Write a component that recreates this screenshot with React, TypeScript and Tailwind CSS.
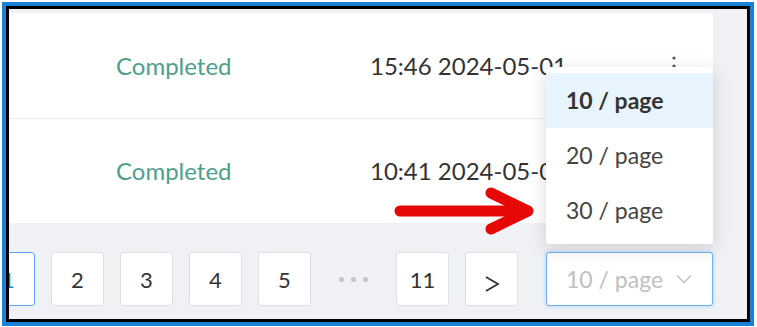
import React from 'react';

const rows = [
  { status: 'Completed', time: '15:46 2024-05-01' },
  { status: 'Completed', time: '10:41 2024-05-01' },
];

const pages = ['1', '2', '3', '4', '5'];
const sizes = ['10 / page', '20 / page', '30 / page'];

const PageButton: React.FC<{ active?: boolean; children: React.ReactNode }> = ({
  active,
  children,
}) => (
  <div
    className={
      'flex h-[54px] w-[53px] shrink-0 items-center justify-center rounded-[3px] border bg-white text-[22px] ' +
      (active ? 'border-[#5aa8f5] text-[#1a7fe0]' : 'border-[#dcdfe4] text-[#333]')
    }
  >
    {children}
  </div>
);

const App: React.FC = () => {
  return (
    <div className="h-[327px] w-[757px] bg-white pb-[1px] pl-[2px] pr-[3px] pt-[2px] font-['Lato','Noto_Sans',sans-serif]">
      <div className="h-full border-4 border-[#1a82d6]">
        <div className="h-full border-[3px] border-black">
          <div className="relative flex h-full flex-col overflow-hidden bg-[#f0f1f4] pt-[4px]">
            {/* Table */}
            <div className="w-[704px] bg-white">
              {rows.map((row, i) => (
                <div
                  key={i}
                  className={
                    'flex items-center pl-[107px] pr-[36px] ' +
                    (i === 0 ? 'h-[106px] border-b border-[#ececec]' : 'h-[104px]')
                  }
                >
                  <span className="w-[254px] text-[24px] text-[#4e9f8c]">{row.status}</span>
                  <span className="text-[24px] text-[#333]">{row.time}</span>
                  <svg className="ml-auto h-[22px] w-[6px]" viewBox="0 0 6 22">
                    <circle cx="3" cy="3" r="1.6" fill="#555" />
                    <circle cx="3" cy="11" r="1.6" fill="#555" />
                    <circle cx="3" cy="19" r="1.6" fill="#555" />
                  </svg>
                </div>
              ))}
            </div>

            {/* Pagination */}
            <div className="ml-[-27px] flex items-center gap-[16px] pt-[29px]">
              {pages.map((p) => (
                <PageButton key={p} active={p === '1'}>
                  {p}
                </PageButton>
              ))}
              <div className="flex h-[54px] w-[53px] shrink-0 items-center justify-center gap-[7px]">
                <span className="h-[5px] w-[5px] rounded-full bg-[#c2c5cc]" />
                <span className="h-[5px] w-[5px] rounded-full bg-[#c2c5cc]" />
                <span className="h-[5px] w-[5px] rounded-full bg-[#c2c5cc]" />
              </div>
              <PageButton>11</PageButton>
              <PageButton>
                <svg className="mt-[10px] h-[18px] w-[16px]" viewBox="0 0 16 18" fill="none">
                  <path d="M2 2 L14 9 L2 16" stroke="#333" strokeWidth="1.8" />
                </svg>
              </PageButton>
              <div className="ml-[12px] flex h-[54px] w-[167px] shrink-0 items-center justify-between rounded-[3px] border border-[#6cb1f5] bg-white pl-[19px] pr-[20px] text-[23px] text-[#c0c0c0] shadow-[0_0_4px_#a9d1fa]">
                <span>10 / page</span>
                <svg className="h-[10px] w-[16px]" viewBox="0 0 16 10" fill="none">
                  <path d="M1 1.5 L8 8.5 L15 1.5" stroke="#c0c0c0" strokeWidth="1.5" />
                </svg>
              </div>
            </div>

            {/* Page size menu */}
            <div className="absolute left-[537px] top-[58px] w-[167px] rounded-[3px] bg-white py-[6px] shadow-[0_4px_18px_rgba(0,0,0,0.15)]">
              {sizes.map((s, i) => (
                <div
                  key={s}
                  className={
                    'flex h-[55px] items-center pl-[20px] text-[23px] ' +
                    (i === 0 ? 'bg-[#e8f5fe] font-bold text-[#333]' : 'text-[#444]')
                  }
                >
                  {s}
                </div>
              ))}
            </div>

            {/* Red arrow annotation */}
            <svg
              className="absolute left-[381px] top-[177px] h-[52px] w-[152px]"
              viewBox="0 0 152 52"
              fill="none"
            >
              <path d="M10 25 L136 25" stroke="#e60707" strokeWidth="11" strokeLinecap="round" />
              <path
                d="M101 7 L138 25 L101 43"
                stroke="#e60707"
                strokeWidth="11"
                strokeLinecap="round"
                strokeLinejoin="round"
              />
            </svg>
          </div>
        </div>
      </div>
    </div>
  );
};

export default App;
